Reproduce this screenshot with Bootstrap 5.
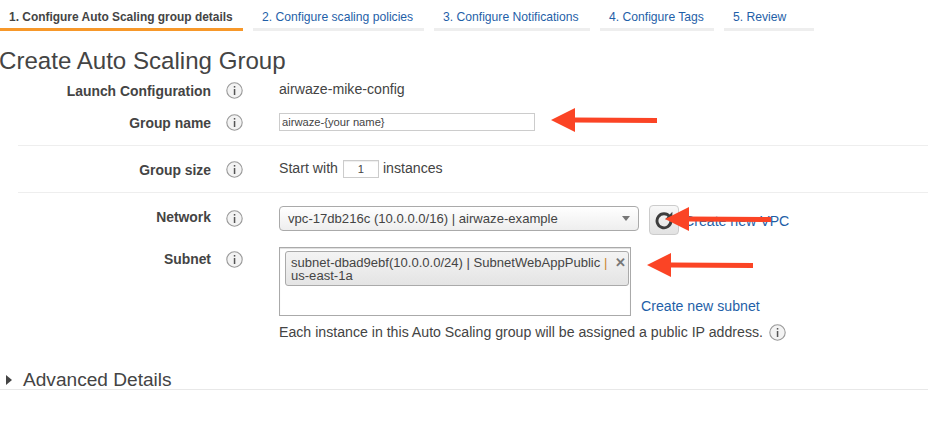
<!DOCTYPE html>
<html lang="en">
<head>
  <meta charset="UTF-8">
  <title>Create Auto Scaling Group</title>
  <link href="https://cdn.jsdelivr.net/npm/bootstrap@5.3.3/dist/css/bootstrap.min.css" rel="stylesheet">
  <style>
    body { font-family: "Liberation Sans", Arial, sans-serif; font-size: 14.15px; color: #444; background: #fff; position: relative; height: 423px; overflow: hidden; }
    a { color: #1f5fa8; text-decoration: none; }

    /* wizard tabs */
    .wiz-tabs { height: 31px; gap: 10px; }
    .wiz-tab { font-size: 12.15px; line-height: 14px; padding: 10px 9px 0; height: 31px; border-bottom: 3px solid #eee; }
    .wiz-tab.active { font-size: 11.95px; font-weight: 700; color: #444; border-bottom-color: #f7982a; }
    .tab-1 { width: 243px; }
    .tab-2 { width: 171px; }
    .tab-3 { width: 156px; }
    .tab-4 { width: 114px; }
    .tab-5 { width: 90px; }

    .page-title { font-size: 24.1px; line-height: 28px; font-weight: 400; color: #444; margin: 16px 0 0 -1px; }

    /* form rows */
    .form-line { display: flex; align-items: center; }
    .field-label { width: 211px; padding-top: 2px; text-align: right; font-weight: 700; font-size: 13.9px; flex: none; }
    .info-slot { width: 68px; padding-left: 15px; flex: none; display: flex; }
    .info-ico { width: 17px; height: 17px; flex: none; display: block; }
    .line-launch { height: 26px; margin-top: 2px; }
    .line-name { height: 32px; margin-top: 3px; margin-bottom: 7px; }
    .divider { border-top: 1px solid #eee; margin-left: 18px; }
    .line-size { height: 46px; }
    .line-network { height: 30px; margin-top: 12px; align-items: flex-start; }
    .line-network .info-slot { margin-top: 5px; }
    .line-subnet { margin-top: 12px; align-items: flex-start; }
    .line-subnet .info-slot { padding-top: 4px; }

    .text-box { border: 1px solid #ccc; height: 18px; font-size: 11.2px; line-height: 16px; color: #444; padding: 0 2px; }
    .name-box { width: 256px; }
    .size-box { width: 36px; margin: 0 4px 0 5px; text-align: center; box-shadow: inset 0 1px 1px #eee; }

    .vpc-select { width: 360px; height: 25px; margin-top: 1px; border: 1px solid #aaa; border-radius: 4px; background: linear-gradient(#fff, #eee); padding: 0 8px; font-size: 13.1px; display: flex; align-items: center; justify-content: space-between; }
    .sel-caret { width: 0; height: 0; border-left: 4px solid transparent; border-right: 4px solid transparent; border-top: 5px solid #777; }
    .refresh-btn { width: 30px; height: 30px; margin-left: 10px; border: 1px solid #ccc; border-radius: 4px; background: linear-gradient(#f8f8f8, #e2e2e2); display: flex; align-items: center; justify-content: center; flex: none; padding: 0; }
    .vpc-link { margin: 6px 0 0 5px; }

    .subnet-box { width: 352px; height: 69px; border: 1px solid #aaa; padding: 3px 1px 0 5px; box-shadow: inset 0 1px 1px #ddd; flex: none; }
    .subnet-token { height: 35px; border: 1px solid #aaa; border-radius: 3px; background: linear-gradient(#f4f4f4, #e4e4e4); padding: 4px 5px 0 5px; font-size: 13.05px; line-height: 13px; position: relative; }
    .token-x { position: absolute; right: 2px; top: 4px; font-size: 13px; font-weight: 700; color: #777; }
    .sep-bar { color: #c9852b; }
    .subnet-link { margin: 51px 0 0 10px; line-height: 16px; }
    .public-note { margin: 7px 0 0 279px; line-height: 18px; display: flex; align-items: center; gap: 6px; }

    .adv-head { margin-top: 23px; height: 26px; padding: 7px 0 0 6px; border-bottom: 1px solid #e8e8e8; display: flex; align-items: center; font-size: 19.1px; line-height: 20px; }
    .adv-caret { width: 0; height: 0; border-top: 5px solid transparent; border-bottom: 5px solid transparent; border-left: 6px solid #444; margin-right: 11px; }

    /* red annotation arrows, drawn over the form */
    .note-arrow { position: absolute; display: block; }
  </style>
</head>
<body>

<svg width="0" height="0" class="d-block">
  <defs>
    <g id="info">
      <circle cx="8.5" cy="8.5" r="7.7" fill="#f3f3f3" stroke="#999" stroke-width="1.1"/>
      <rect x="7.8" y="7" width="1.5" height="6" fill="#555"/>
      <rect x="7.8" y="4" width="1.5" height="1.6" fill="#555"/>
    </g>
    <g id="red-arrow">
      <polygon points="0,12 24,0 24,9.5 106,10 106,15 24,14.5 24,24" fill="#fb4425"/>
    </g>
  </defs>
</svg>

<!-- wizard steps -->
<div class="d-flex wiz-tabs">
  <div class="wiz-tab tab-1 active">1. Configure Auto Scaling group details</div>
  <a class="wiz-tab tab-2" href="#">2. Configure scaling policies</a>
  <a class="wiz-tab tab-3" href="#">3. Configure Notifications</a>
  <a class="wiz-tab tab-4" href="#">4. Configure Tags</a>
  <a class="wiz-tab tab-5" href="#">5. Review</a>
</div>

<h1 class="page-title">Create Auto Scaling Group</h1>

<div class="form-line line-launch">
  <div class="field-label">Launch Configuration</div>
  <div class="info-slot"><svg class="info-ico"><use href="#info"/></svg></div>
  <div>airwaze-mike-config</div>
</div>
<div class="form-line line-name">
  <div class="field-label">Group name</div>
  <div class="info-slot"><svg class="info-ico"><use href="#info"/></svg></div>
  <div class="text-box name-box">airwaze-{your name}</div>
</div>
<div class="divider"></div>
<div class="form-line line-size">
  <div class="field-label">Group size</div>
  <div class="info-slot"><svg class="info-ico"><use href="#info"/></svg></div>
  <div>Start with</div>
  <div class="text-box size-box">1</div>
  <div>instances</div>
</div>
<div class="divider"></div>
<div class="form-line line-network">
  <div class="field-label">Network</div>
  <div class="info-slot"><svg class="info-ico"><use href="#info"/></svg></div>
  <div class="vpc-select"><span>vpc-17db216c (10.0.0.0/16) | airwaze-example</span><span class="sel-caret"></span></div>
  <button class="refresh-btn" type="button">
    <svg width="20" height="20" viewBox="0 0 20 20">
      <path d="M15.6 6.6 A7 7 0 1 0 17 11.2" fill="none" stroke="#3d3d3d" stroke-width="2.9"/>
      <polygon points="18.4,1.8 18.4,9.2 11.2,9.2" fill="#3d3d3d"/>
    </svg>
  </button>
  <a class="vpc-link" href="#">Create new VPC</a>
</div>
<div class="form-line line-subnet">
  <div class="field-label">Subnet</div>
  <div class="info-slot"><svg class="info-ico"><use href="#info"/></svg></div>
  <div class="subnet-box">
    <div class="subnet-token">subnet-dbad9ebf(10.0.0.0/24) | SubnetWebAppPublic <span class="sep-bar">|</span><br>us-east-1a<span class="token-x">✕</span></div>
  </div>
  <a class="subnet-link" href="#">Create new subnet</a>
</div>
<div class="public-note">
  <span>Each instance in this Auto Scaling group will be assigned a public IP address.</span>
  <svg class="info-ico"><use href="#info"/></svg>
</div>

<div class="adv-head"><span class="adv-caret"></span>Advanced Details</div>

<svg class="note-arrow" style="left:551px;top:108px" width="106" height="24"><use href="#red-arrow"/></svg>
<svg class="note-arrow" style="left:665px;top:207px" width="107" height="24"><use href="#red-arrow"/></svg>
<svg class="note-arrow" style="left:647px;top:253px" width="106" height="24"><use href="#red-arrow"/></svg>

</body>
</html>
